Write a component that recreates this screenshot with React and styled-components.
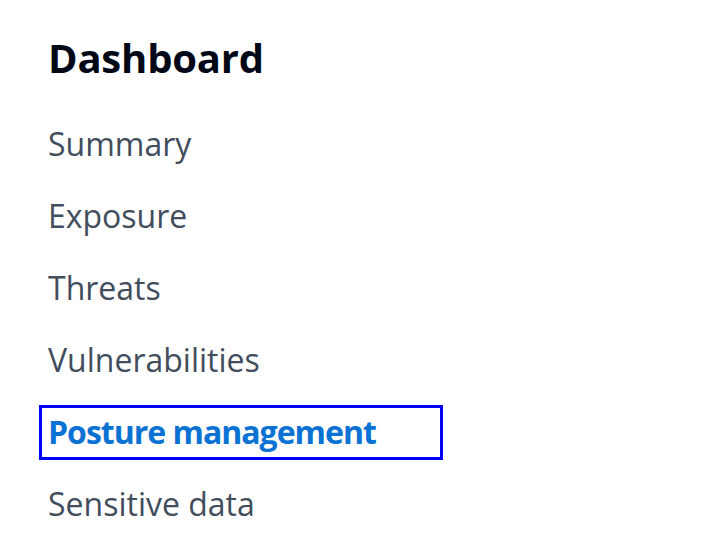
import React from "react";
import styled, { createGlobalStyle } from "styled-components";

const GlobalStyle = createGlobalStyle`
  body {
    margin: 0;
    background: #ffffff;
    font-family: "Open Sans", "Noto Sans", Arial, sans-serif;
  }
`;

const items = [
  "Summary",
  "Exposure",
  "Threats",
  "Vulnerabilities",
  "Posture management",
  "Sensitive data",
];

const Nav = styled.nav`
  padding: 30px 0 0 48px;
  width: 723px;
  height: 534px;
  box-sizing: border-box;
`;

const Heading = styled.h2`
  margin: 0 0 22px;
  font-size: 40px;
  line-height: 56px;
  font-weight: 700;
  color: #000716;
  letter-spacing: -0.2px;
`;

const List = styled.ul`
  list-style: none;
  margin: 0;
  padding: 0;
  display: flex;
  flex-direction: column;
`;

const Item = styled.li`
  height: 72px;
  display: flex;
  align-items: center;
  margin-left: ${(p) => (p.$active ? "-9px" : "0")};
`;

const Link = styled.a`
  font-size: 32px;
  line-height: 40px;
  text-decoration: none;
  color: ${(p) => (p.$active ? "#0972d3" : "#414d5c")};
  font-weight: ${(p) => (p.$active ? 700 : 400)};
  letter-spacing: ${(p) => (p.$active ? "-1px" : "0")};
  ${(p) =>
    p.$active &&
    `
    border: 3px solid #0000ff;
    width: 404px;
    height: 55px;
    box-sizing: border-box;
    display: flex;
    align-items: center;
    padding-left: 6px;
  `}
`;

export default function App() {
  const active = "Posture management";
  return (
    <>
      <GlobalStyle />
      <Nav>
        <Heading>Dashboard</Heading>
        <List>
          {items.map((label) => (
            <Item key={label} $active={label === active}>
              <Link href="#" $active={label === active}>
                {label}
              </Link>
            </Item>
          ))}
        </List>
      </Nav>
    </>
  );
}
